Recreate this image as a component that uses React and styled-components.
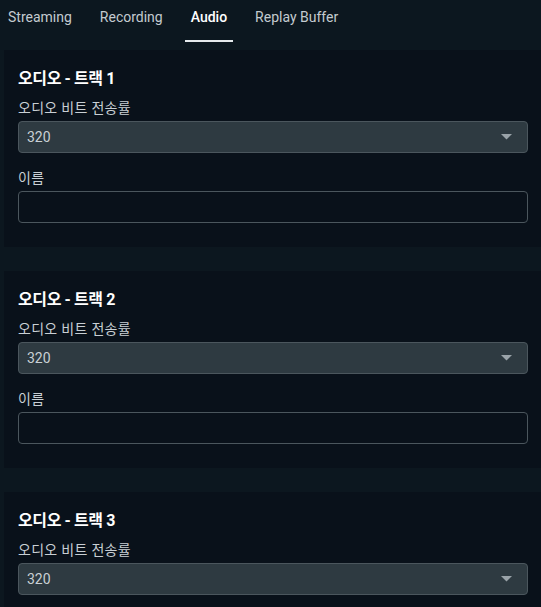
import React from 'react'
import styled, { createGlobalStyle } from 'styled-components'

const GlobalStyle = createGlobalStyle`
  html, body {
    margin: 0;
    padding: 0;
    background: #0c171f;
    font-family: Roboto, "Noto Sans CJK KR", sans-serif;
  }
`

const Page = styled.div`
  width: 541px;
  height: 607px;
  overflow: hidden;
  background: #0c171f;
`

const TabBar = styled.div`
  display: flex;
  gap: 16px;
  height: 50px;
  padding-left: 2px;
  box-sizing: border-box;
`

const Tab = styled.div`
  padding: 0 6px 7px;
  height: 42px;
  display: flex;
  align-items: center;
  box-sizing: border-box;
  font-size: 14px;
  color: ${({ active }) => (active ? '#ffffff' : '#c4cbd0')};
  font-weight: ${({ active }) => (active ? 500 : 400)};
  border-bottom: 2px solid ${({ active }) => (active ? '#e6eaed' : 'transparent')};
`

const Cards = styled.div`
  display: flex;
  flex-direction: column;
  gap: 24px;
`

const Card = styled.section`
  margin-left: 4px;
  background: #09111a;
  padding: 19px 13px 24px 14px;
  height: 197px;
  box-sizing: border-box;
  overflow: hidden;
`

const Title = styled.h3`
  margin: 0 0 11px;
  font-size: 16px;
  line-height: 20px;
  font-weight: 700;
  letter-spacing: -0.4px;
  color: #ffffff;
`

const Label = styled.div`
  font-size: 14px;
  line-height: 16px;
  letter-spacing: 0.3px;
  color: #c8cfd4;
  margin-bottom: 5px;
`

const Field = styled.div`
  margin-bottom: 17px;
`

const Select = styled.div`
  height: 32px;
  box-sizing: border-box;
  border: 1px solid #4b565d;
  border-radius: 4px;
  background: #2e3a41;
  display: flex;
  align-items: center;
  justify-content: space-between;
  padding: 0 15px 0 8px;
  font-size: 14px;
  color: #c9d0d5;
`

const Input = styled.div`
  height: 32px;
  box-sizing: border-box;
  border: 1px solid #4b565d;
  border-radius: 4px;
  background: #09111a;
`

const Caret = () => (
  <svg width="11" height="6" viewBox="0 0 11 6">
    <path d="M0 0 H11 L5.5 5.5 Z" fill="#9aa3a9" />
  </svg>
)

const tracks = [1, 2, 3]

export default function App() {
  return (
    <Page>
      <GlobalStyle />
      <TabBar>
        <Tab>Streaming</Tab>
        <Tab>Recording</Tab>
        <Tab active>Audio</Tab>
        <Tab>Replay Buffer</Tab>
      </TabBar>
      <Cards>
        {tracks.map((n) => (
          <Card key={n}>
            <Title>오디오 - 트랙 {n}</Title>
            <Field>
              <Label>오디오 비트 전송률</Label>
              <Select>
                320
                <Caret />
              </Select>
            </Field>
            <Field>
              <Label>이름</Label>
              <Input />
            </Field>
          </Card>
        ))}
      </Cards>
    </Page>
  )
}
